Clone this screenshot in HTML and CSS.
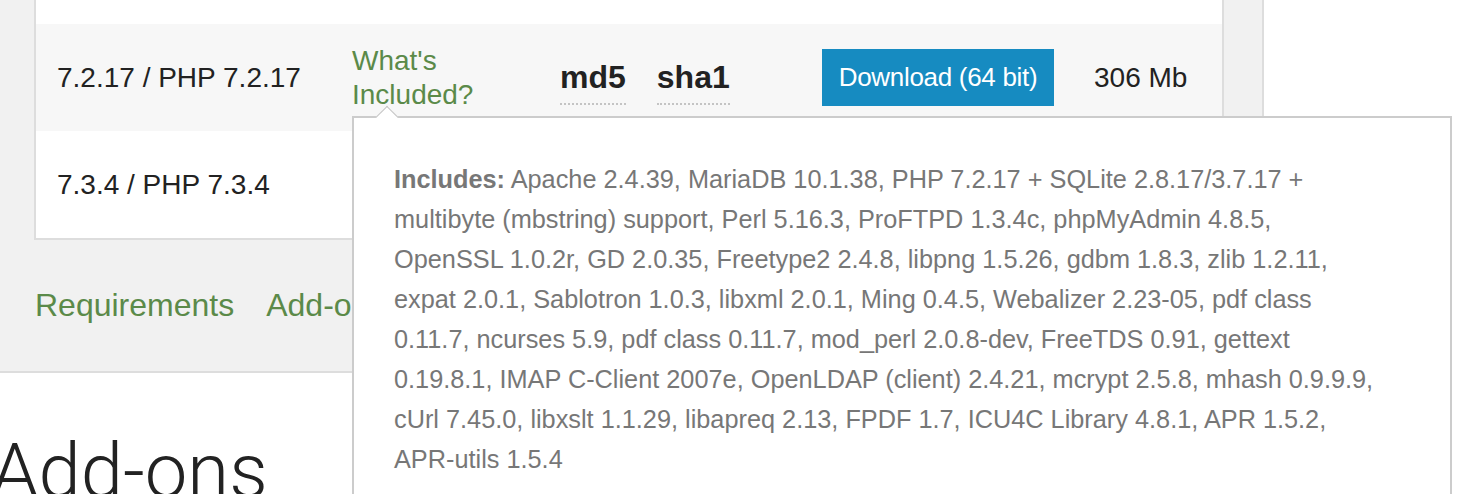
FILE: index.html
```html
<!DOCTYPE html>
<html lang="en">
<head>
<meta charset="utf-8">
<title>Downloads</title>
<link rel="stylesheet" href="styles.css">
</head>
<body>
<div class="page">
  <section class="downloads">
    <div class="panel">
      <div class="row row-prev"></div>
      <div class="row row-alt">
        <div class="version">7.2.17 / PHP 7.2.17</div>
        <div class="included">
          <a class="link" href="#">What's Included?</a>
          <div class="popover">
            <p class="popover-text"><strong>Includes:</strong> Apache 2.4.39, MariaDB 10.1.38, PHP 7.2.17 + SQLite 2.8.17/3.7.17 +<br>multibyte (mbstring) support, Perl 5.16.3, ProFTPD 1.3.4c, phpMyAdmin 4.8.5,<br>OpenSSL 1.0.2r, GD 2.0.35, Freetype2 2.4.8, libpng 1.5.26, gdbm 1.8.3, zlib 1.2.11,<br>expat 2.0.1, Sablotron 1.0.3, libxml 2.0.1, Ming 0.4.5, Webalizer 2.23-05, pdf class<br>0.11.7, ncurses 5.9, pdf class 0.11.7, mod_perl 2.0.8-dev, FreeTDS 0.91, gettext<br>0.19.8.1, IMAP C-Client 2007e, OpenLDAP (client) 2.4.21, mcrypt 2.5.8, mhash 0.9.9.9,<br>cUrl 7.45.0, libxslt 1.1.29, libapreq 2.13, FPDF 1.7, ICU4C Library 4.8.1, APR 1.5.2,<br>APR-utils 1.5.4</p>
          </div>
        </div>
        <div class="hashes"><span class="hash">md5</span><span class="hash">sha1</span></div>
        <div class="action"><a class="btn" href="#">Download (64 bit)</a></div>
        <div class="size">306 Mb</div>
      </div>
      <div class="row">
        <div class="version">7.3.4 / PHP 7.3.4</div>
      </div>
    </div>
    <nav class="links">
      <a class="link" href="#">Requirements</a>
      <a class="link" href="#">Add-ons</a>
    </nav>
  </section>
  <h1 class="addons">Add-ons</h1>
</div>
</body>
</html>
```

FILE: styles.css
```css
html, body {
  margin: 0;
  padding: 0;
  overflow: hidden;
  background: #ffffff;
}

body {
  font-family: "Liberation Sans", Arial, Helvetica, sans-serif;
  color: #222222;
}

.page {
  width: 1472px;
  height: 494px;
  overflow: hidden;
}

.downloads {
  width: 1262px;
  background: #f1f1f1;
  border-right: 2px solid #dddddd;
  border-bottom: 2px solid #dddddd;
}

.panel {
  margin-left: 34px;
  width: 1186px;
  background: #ffffff;
  border: 2px solid #dddddd;
  border-top: none;
}

.row {
  display: grid;
  grid-template-columns: 295px 208px 262px 272px 1fr;
  align-items: center;
  height: 107px;
  padding-left: 21px;
  font-size: 28px;
}

.row-prev {
  height: 24px;
}

.row-alt {
  background: #f7f7f7;
}

.link {
  color: #5b8a49;
  text-decoration: none;
}

.included {
  position: relative;
  align-self: stretch;
  display: flex;
  align-items: center;
  line-height: 34px;
  padding-right: 40px;
}

.hashes {
  display: flex;
  gap: 31px;
  margin-top: 8px;
}

.hash {
  font-size: 32px;
  font-weight: bold;
  color: #222222;
  padding-bottom: 7px;
  border-bottom: 2px dotted #c4c4c4;
}

.btn {
  display: inline-flex;
  align-items: center;
  justify-content: center;
  width: 232px;
  height: 57px;
  margin-top: -1px;
  background: #168bc1;
  color: #ffffff;
  font-size: 26px;
  text-decoration: none;
  letter-spacing: -0.3px;
}

.size {
  font-size: 28px;
}

.popover {
  position: absolute;
  left: 0;
  top: 92px;
  z-index: 10;
  width: 1096px;
  height: 420px;
  background: #ffffff;
  border: 2px solid #cccccc;
}

.popover::before {
  content: "";
  position: absolute;
  left: 25px;
  top: -9px;
  width: 15px;
  height: 15px;
  background: #ffffff;
  border-top: 1px solid #c4c4c4;
  border-left: 1px solid #c4c4c4;
  transform: rotate(45deg);
}

.popover-text {
  margin: 0;
  padding: 41px 40px 40px 40px;
  font-size: 25.3px;
  line-height: 40px;
  color: #777777;
}

.popover-text strong {
  font-weight: bold;
}

.links {
  display: flex;
  gap: 32px;
  align-items: center;
  height: 131px;
  padding-left: 35px;
  font-size: 32px;
}

.addons {
  margin: 60px 0 0 -9px;
  font-family: Roboto, "Liberation Sans", sans-serif;
  font-weight: 300;
  font-size: 76px;
  line-height: 76px;
  color: #222222;
}
```
